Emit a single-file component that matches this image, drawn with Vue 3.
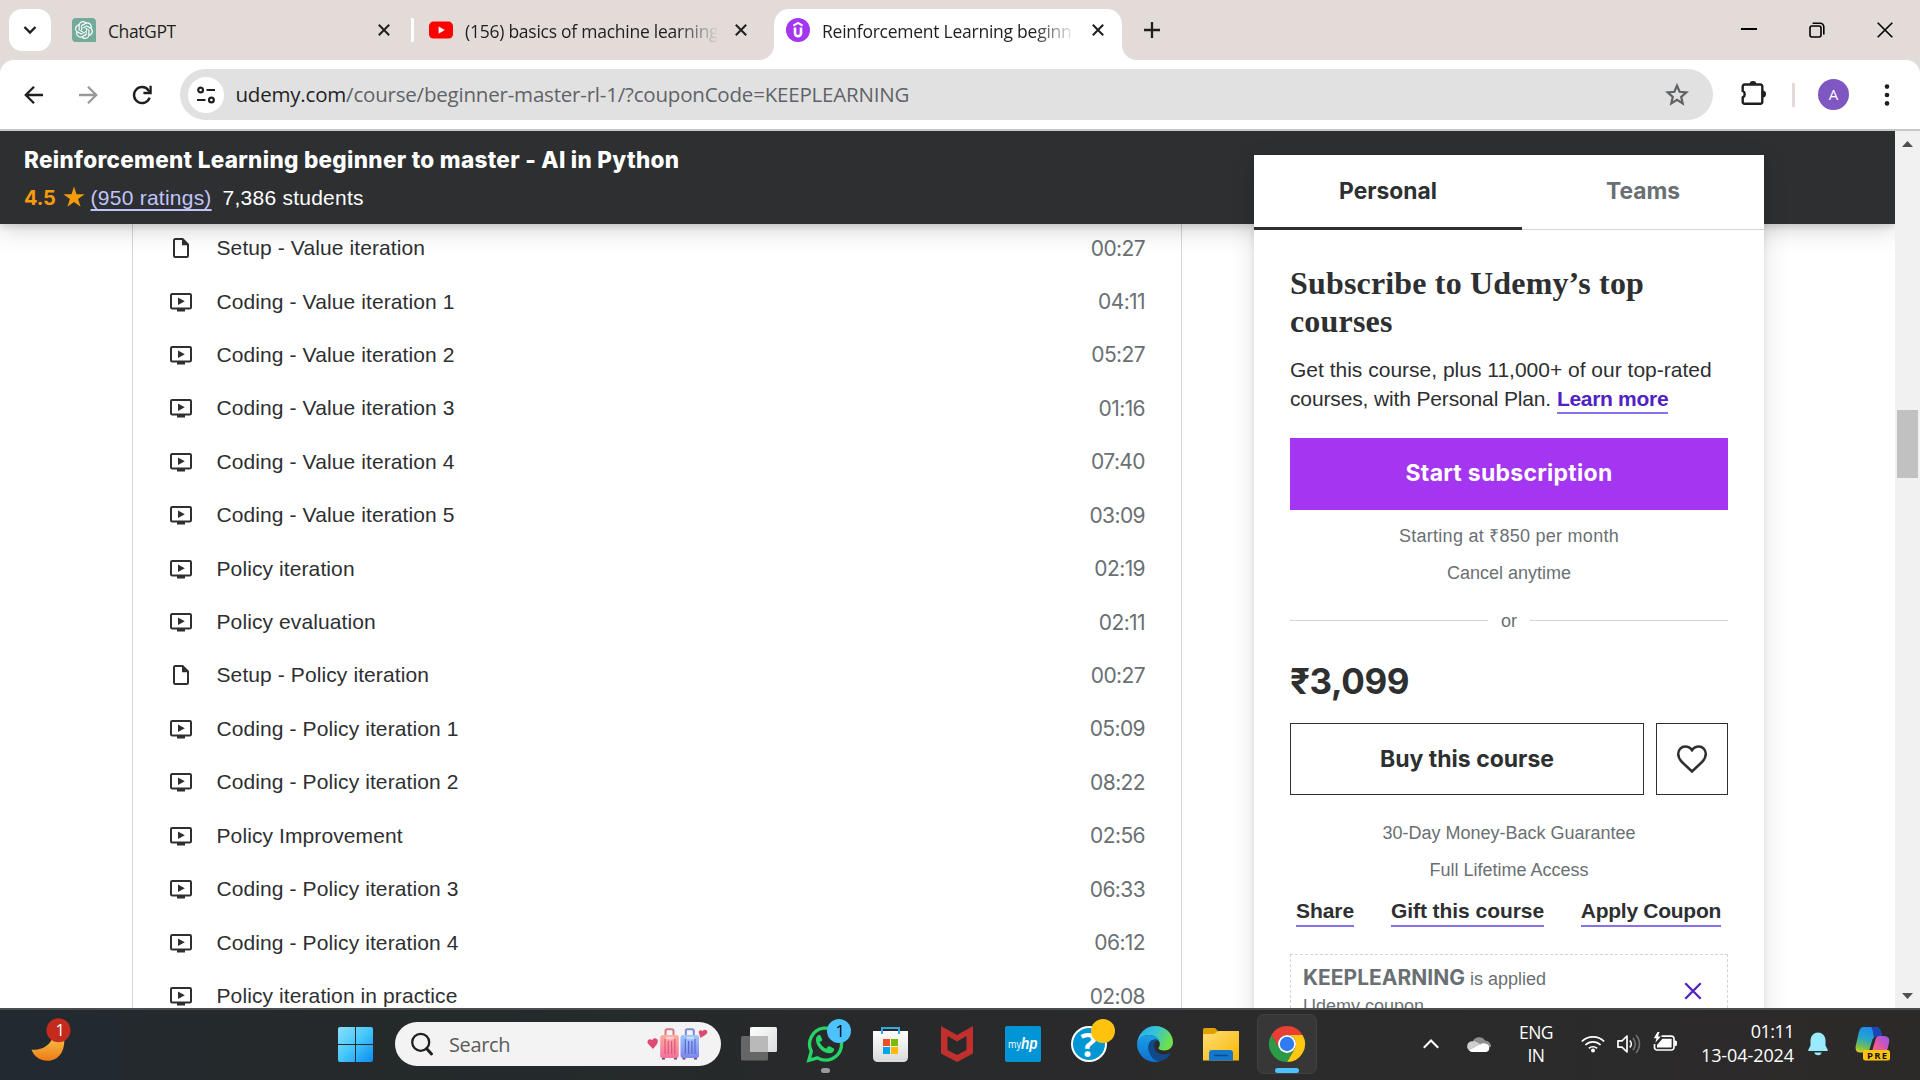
<script setup>
const lessons = [
  { title: 'Setup - Value iteration', time: '00:27', doc: true },
  { title: 'Coding - Value iteration 1', time: '04:11' },
  { title: 'Coding - Value iteration 2', time: '05:27' },
  { title: 'Coding - Value iteration 3', time: '01:16' },
  { title: 'Coding - Value iteration 4', time: '07:40' },
  { title: 'Coding - Value iteration 5', time: '03:09' },
  { title: 'Policy iteration', time: '02:19' },
  { title: 'Policy evaluation', time: '02:11' },
  { title: 'Setup - Policy iteration', time: '00:27', doc: true },
  { title: 'Coding - Policy iteration 1', time: '05:09' },
  { title: 'Coding - Policy iteration 2', time: '08:22' },
  { title: 'Policy Improvement', time: '02:56' },
  { title: 'Coding - Policy iteration 3', time: '06:33' },
  { title: 'Coding - Policy iteration 4', time: '06:12' },
  { title: 'Policy iteration in practice', time: '02:08' },
]
</script>

<template>
  <div class="screen">
    <div class="tabstrip">
      <button class="tab-search">
        <svg width="14" height="10" viewBox="0 0 14 10"><path d="M1.5 2 7 7.5 12.5 2" fill="none" stroke="#1f1f1f" stroke-width="2.4" /></svg>
      </button>
      <div class="tab tab-chat">
        <svg class="favicon" width="24" height="24" viewBox="0 0 24 24">
          <path d="M4 0h16a4 4 0 0 1 4 4v20H4a4 4 0 0 1-4-4V4a4 4 0 0 1 4-4z" fill="#74aa9c" />
          <g transform="translate(3 3) scale(.75)"><path fill="#fff" d="M22.2819 9.8211a5.9847 5.9847 0 0 0-.5157-4.9108 6.0462 6.0462 0 0 0-6.5098-2.9A6.0651 6.0651 0 0 0 4.9807 4.1818a5.9847 5.9847 0 0 0-3.9977 2.9 6.0462 6.0462 0 0 0 .7427 7.0966 5.98 5.98 0 0 0 .511 4.9107 6.051 6.051 0 0 0 6.5146 2.9001A5.9847 5.9847 0 0 0 13.2599 24a6.0557 6.0557 0 0 0 5.7718-4.2058 5.9894 5.9894 0 0 0 3.9977-2.9001 6.0557 6.0557 0 0 0-.7475-7.0729zm-9.022 12.6081a4.4755 4.4755 0 0 1-2.8764-1.0408l.1419-.0804 4.7783-2.7582a.7948.7948 0 0 0 .3927-.6813v-6.7369l2.02 1.1686a.071.071 0 0 1 .038.052v5.5826a4.504 4.504 0 0 1-4.4945 4.4944zm-9.6607-4.1254a4.4708 4.4708 0 0 1-.5346-3.0137l.142.0852 4.783 2.7582a.7712.7712 0 0 0 .7806 0l5.8428-3.3685v2.3324a.0804.0804 0 0 1-.0332.0615L9.74 19.9502a4.4992 4.4992 0 0 1-6.1408-1.6464zM2.3408 7.8956a4.485 4.485 0 0 1 2.3655-1.9728V11.6a.7664.7664 0 0 0 .3879.6765l5.8144 3.3543-2.0201 1.1685a.0757.0757 0 0 1-.071 0l-4.8303-2.7865A4.504 4.504 0 0 1 2.3408 7.872zm16.5963 3.8558L13.1038 8.364 15.1192 7.2a.0757.0757 0 0 1 .071 0l4.8303 2.7913a4.4944 4.4944 0 0 1-.6765 8.1042v-5.6772a.79.79 0 0 0-.407-.667zm2.0107-3.0231l-.142-.0852-4.7735-2.7818a.7759.7759 0 0 0-.7854 0L9.409 9.2297V6.8974a.0662.0662 0 0 1 .0284-.0615l4.8303-2.7866a4.4992 4.4992 0 0 1 6.6802 4.66zM8.3065 12.863l-2.02-1.1638a.0804.0804 0 0 1-.038-.0567V6.0742a4.4992 4.4992 0 0 1 7.3757-3.4537l-.142.0805L8.704 5.459a.7948.7948 0 0 0-.3927.6813zm1.0976-2.3654l2.602-1.4998 2.6069 1.4998v2.9994l-2.5974 1.4997-2.6067-1.4997Z" /></g>
        </svg>
        <span class="tab-title">ChatGPT</span>
        <svg class="tab-close" width="12" height="12" viewBox="0 0 12 12"><path d="M.8.8 11.2 11.2M11.2.8.8 11.2" stroke="#1f1f1f" stroke-width="2" /></svg>
      </div>
      <i class="tab-divider"></i>
      <div class="tab tab-video">
        <svg class="favicon" width="24" height="24" viewBox="0 0 24 24"><rect y="3.6" width="24" height="17" rx="4.4" fill="#f00" /><path d="M9.6 8.4 15.8 12.1 9.6 15.8z" fill="#fff" /></svg>
        <span class="tab-title fade">(156) basics of machine learning</span>
        <svg class="tab-close" width="12" height="12" viewBox="0 0 12 12"><path d="M.8.8 11.2 11.2M11.2.8.8 11.2" stroke="#1f1f1f" stroke-width="2" /></svg>
      </div>
      <div class="tab tab-active">
        <svg class="favicon" width="24" height="24" viewBox="0 0 24 24"><circle cx="12" cy="12" r="12" fill="#a435f0" /><path d="M7.4 7.6 12 4.9l4.6 2.7" fill="none" stroke="#fff" stroke-width="2" /><path d="M9 9.6v5.6a3 3 0 0 0 6 0V9.6" fill="none" stroke="#fff" stroke-width="2.6" /></svg>
        <span class="tab-title fade">Reinforcement Learning beginn</span>
        <svg class="tab-close" width="12" height="12" viewBox="0 0 12 12"><path d="M.8.8 11.2 11.2M11.2.8.8 11.2" stroke="#1f1f1f" stroke-width="2" /></svg>
      </div>
      <svg class="new-tab" width="16" height="16" viewBox="0 0 16 16"><path d="M8 0v16M0 8h16" stroke="#1f1f1f" stroke-width="2.3" /></svg>
      <div class="window-buttons">
        <svg width="16" height="16" viewBox="0 0 16 16"><path d="M0 7h16" stroke="#000" stroke-width="2" /></svg>
        <svg width="16" height="16" viewBox="0 0 16 16"><rect x="1" y="4" width="11" height="11" rx="2" fill="none" stroke="#000" stroke-width="1.6" /><path d="M3.6 1.2h7.6a3.6 3.6 0 0 1 3.6 3.6v7.6" fill="none" stroke="#000" stroke-width="1.6" /></svg>
        <svg width="16" height="16" viewBox="0 0 16 16"><path d="M.7.7 15.3 15.3M15.3.7.7 15.3" stroke="#000" stroke-width="1.6" /></svg>
      </div>
    </div>

    <div class="toolbar-back">
      <div class="toolbar">
        <svg width="20" height="20" viewBox="0 0 20 20"><path d="M19 10H2.500M10 1.800 1.800 10 10 18.200" fill="none" stroke="#1f1f1f" stroke-width="2.300" /></svg>
        <svg class="fwd" width="20" height="20" viewBox="0 0 20 20"><path d="M1 10h16.500M10 1.800 18.200 10 10 18.200" fill="none" stroke="#989898" stroke-width="2.300" /></svg>
        <svg class="reload" width="20" height="20" viewBox="0 0 20 20"><path d="M17.600 12.600A8 8 0 1 1 16.400 5.200L18 7" fill="none" stroke="#1f1f1f" stroke-width="2.400" /><path d="M18.600.8V8H11.400" fill="none" stroke="#1f1f1f" stroke-width="2.300" /></svg>
        <div class="omnibox">
          <span class="site-info">
            <svg width="18" height="18" viewBox="0 0 18 18" fill="none" stroke="#1f1f1f" stroke-width="2.200"><circle cx="3.600" cy="4" r="2.400" /><path d="M9.500 4H18M0 14h8.500" /><circle cx="14.400" cy="14" r="2.400" /></svg>
          </span>
          <span class="url"><b>udemy.com</b>/course/beginner-master-rl-1/?couponCode=KEEPLEARNING</span>
          <svg class="star" width="24" height="24" viewBox="0 0 24 24"><path d="m12 2.600 2.600 6.200 6.700.6-5.100 4.400 1.500 6.600-5.700-3.500-5.700 3.500 1.500-6.600L2.700 9.400l6.700-.6z" fill="none" stroke="#5f6368" stroke-width="2.200" /></svg>
        </div>
        <svg class="puzzle" width="26" height="26" viewBox="0 0 26 26"><path d="M3.500 4.500h16a1.800 1.800 0 0 1 1.800 1.800V22a1.800 1.800 0 0 1-1.800 1.800h-16A1.800 1.800 0 0 1 1.700 22v-4.600a3.600 3.600 0 0 0 0-6.500V6.300a1.800 1.800 0 0 1 1.800-1.800z" fill="none" stroke="#1f1f1f" stroke-width="2.400" /><path d="M8.600 4.500a3.400 3.400 0 0 1 6.800 0zM21.500 10.600a3.500 3.500 0 0 1 0 7z" fill="#1f1f1f" /></svg>
        <i class="bar-divider"></i>
        <span class="avatar">A</span>
        <svg class="menu" width="6" height="22" viewBox="0 0 6 22" fill="#1f1f1f"><circle cx="3" cy="2.600" r="2.300" /><circle cx="3" cy="11" r="2.300" /><circle cx="3" cy="19.400" r="2.300" /></svg>
      </div>
    </div>

    <div class="viewport">
      <div class="page">
        <header class="course-bar">
          <h1>Reinforcement Learning beginner to master - AI in Python</h1>
          <div class="stats">
            <b class="score">4.5</b>
            <svg width="22" height="22" viewBox="0 0 22 22"><path d="m11 .6 2.500 7.700h8.100l-6.500 4.700 2.500 7.700L11 16l-6.600 4.700 2.500-7.700L.4 8.300h8.100z" fill="#f69c08" /></svg>
            <a>(950 ratings)</a>
            <span class="students">7,386 students</span>
          </div>
        </header>
        <ul class="lessons">
          <li v-for="(l, i) in lessons" :key="i">
            <svg v-if="l.doc" width="22" height="22" viewBox="0 0 22 22"><path d="M12.600 2H5.200A1.200 1.200 0 0 0 4 3.200v15.600A1.200 1.200 0 0 0 5.200 20h11.600a1.200 1.200 0 0 0 1.200-1.200V7.400z" fill="none" stroke="#2d2f31" stroke-width="2" /><path d="M12 1.500v6.700h6.700z" fill="#2d2f31" /></svg>
            <svg v-else width="22" height="22" viewBox="0 0 22 22"><rect x="1" y="3" width="20" height="14.500" rx="1.200" fill="none" stroke="#2d2f31" stroke-width="2" /><path d="M8 6.500v7.500l6.800-3.750zM7 18h8v2.500H7z" fill="#2d2f31" /></svg>
            <span class="title">{{ l.title }}</span>
            <span class="time">{{ l.time }}</span>
          </li>
        </ul>

        <aside class="card">
          <div class="plan-tabs">
            <div class="plan on">Personal</div>
            <div class="plan">Teams</div>
          </div>
          <div class="card-body">
            <h2>Subscribe to Udemy’s top<br />courses</h2>
            <p class="pitch">Get this course, plus 11,000+ of our top-rated<br /><span class="tight">courses, with Personal Plan.</span> <a>Learn more</a></p>
            <button class="start">Start subscription</button>
            <p class="note loose">Starting at ₹850 per month</p>
            <p class="note">Cancel anytime</p>
            <div class="or"><i></i><span>or</span><i></i></div>
            <div class="price">₹3,099</div>
            <div class="buy-row">
              <button class="buy">Buy this course</button>
              <button class="wish">
                <svg width="32" height="30" viewBox="0 0 32 30"><path d="M16 27.500 6 18C3.300 15.300 2.200 12.800 2.200 9.800 2.200 5.500 5.400 2.600 9.200 2.600c2.700 0 4.900.9 6.800 3.600 1.900-2.700 4.100-3.600 6.800-3.600 3.800 0 7 2.900 7 7.200 0 3-1.100 5.500-3.800 8.200z" fill="none" stroke="#2d2f31" stroke-width="2.500" /></svg>
              </button>
            </div>
            <p class="note first">30-Day Money-Back Guarantee</p>
            <p class="note">Full Lifetime Access</p>
            <div class="links">
              <a>Share</a><a>Gift this course</a><a class="apply">Apply Coupon</a>
            </div>
            <div class="coupon">
              <div><b>KEEPLEARNING</b> is applied<br />Udemy coupon</div>
              <svg width="18" height="18" viewBox="0 0 18 18"><path d="M1.300 1.300 16.700 16.700M16.700 1.300 1.300 16.700" stroke="#5022c3" stroke-width="2.300" /></svg>
            </div>
          </div>
        </aside>
      </div>
      <div class="scrollbar">
        <svg width="11" height="6" viewBox="0 0 11 6"><path d="M0 6 5.500 0 11 6z" fill="#505050" /></svg>
        <i></i>
        <svg class="down" width="11" height="6" viewBox="0 0 11 6"><path d="M0 0h11L5.500 6z" fill="#505050" /></svg>
      </div>
    </div>

    <footer class="taskbar">
      <svg class="moon" width="36" height="60" viewBox="0 0 36 60">
        <defs><linearGradient id="mo" x1="0" y1="0" x2="0" y2="1"><stop offset="0" stop-color="#f8c64a" /><stop offset="1" stop-color="#ee7a16" /></linearGradient></defs>
        <path d="M.5 35.500C9 37 20 32 22.500 21L33 22C35 38 27 46.500 17 46.800 8 47 2.500 41.500.5 35.500z" fill="url(#mo)" />
        <circle cx="27.500" cy="16.300" r="12" fill="#c42b1c" />
        <text x="24.500" y="22" fill="#fff" font-family="Open Sans" font-size="16.500">1</text>
      </svg>
      <svg class="start-menu" width="36" height="60" viewBox="0 0 36 60">
        <defs><linearGradient id="wi" x1="0" y1="0" x2="1" y2="1"><stop offset="0" stop-color="#8be0ff" /><stop offset=".5" stop-color="#45c6fb" /><stop offset="1" stop-color="#0a8cf0" /></linearGradient></defs>
        <path d="M2 13h15v17H0V15a2 2 0 0 1 2-2zM18 13h15.500a2 2 0 0 1 1.500 2v15H18zM0 31h17v17H2a2 2 0 0 1-2-2zM18 31h17v15a2 2 0 0 1-2 2H18z" fill="url(#wi)" />
      </svg>
      <div class="search">
        <svg width="22" height="24" viewBox="0 0 22 24"><circle cx="9.700" cy="10.300" r="8.500" fill="none" stroke="#1f1f1f" stroke-width="2.300" /><path d="m15.500 16.500 5 5.500" stroke="#1f1f1f" stroke-width="3" stroke-linecap="round" /></svg>
        <span>Search</span>
        <svg class="luggage" width="62" height="34" viewBox="0 0 62 34">
          <defs>
            <linearGradient id="lp" x1="0" y1="0" x2="0" y2="1"><stop offset="0" stop-color="#ffae9c" /><stop offset="1" stop-color="#f2709c" /></linearGradient>
            <linearGradient id="lb" x1="0" y1="0" x2="0" y2="1"><stop offset="0" stop-color="#9ec8fb" /><stop offset="1" stop-color="#7d86ea" /></linearGradient>
          </defs>
          <path d="M6 22 1 16.800C-.8 13.500 2.500 10.500 5.200 13.200c1.400-3 6.200-2.200 5.600 1.600-.2 2.400-2.600 4.600-4.800 7.200z" fill="#dd4a72" />
          <path d="m53.500 11-1.700-5.200c-.5-2.600 2.400-3.600 3.700-1.600 1.500-2.800 5.500-1.500 4.800 1.300-.5 2.200-3.800 3.500-6.800 5.500z" fill="#dd4a72" />
          <path d="M18.500 9V3.800A1.600 1.600 0 0 1 20.100 2.200h4.800A1.600 1.600 0 0 1 26.500 3.800V9" fill="none" stroke="#d77a80" stroke-width="2" />
          <path d="M38.800 9V3.800A1.600 1.600 0 0 1 40.400 2.200h4.800A1.600 1.600 0 0 1 46.800 3.800V9" fill="none" stroke="#7d88da" stroke-width="2" />
          <rect x="13.200" y="8" width="18.500" height="23" rx="2.500" fill="url(#lp)" /><rect x="33.500" y="8" width="18.500" height="23" rx="2.500" fill="url(#lb)" />
          <path d="M18 12v15M21.300 14v13M24.600 14v13M27.800 12v15" stroke="#d65583" stroke-width="1.100" /><path d="M38.300 12v15M41.600 14v13M44.900 14v13M48 12v15" stroke="#5663cd" stroke-width="1.100" />
          <path d="M19.500 11h7" stroke="#ffd0d4" stroke-width="2.500" /><path d="M40 11h7" stroke="#c3dcff" stroke-width="2.500" />
          <path d="M15 31.800h3M27 31.800h3M35.500 31.800h3M47 31.800h3" stroke="#6b4a80" stroke-width="1.500" />
        </svg>
      </div>
      <div class="apps">
        <svg width="36" height="60" viewBox="0 0 36 60">
          <defs><linearGradient id="tv" x1="0" y1="0" x2="1" y2="1"><stop offset="0" stop-color="#fff" /><stop offset="1" stop-color="#dcdcdc" /></linearGradient></defs>
          <rect x="9" y="13" width="27" height="25" rx="1.500" fill="url(#tv)" /><rect y="22" width="27" height="24.500" rx="1.500" fill="#666" /><path d="M9 22h18v16H9z" fill="#b9b9b9" />
        </svg>
        <svg width="36" height="60" viewBox="0 0 36 60">
          <path d="M1.800 46.300 4.300 37.300A16 16 0 1 1 10.500 43.900z" fill="none" stroke="#25d366" stroke-width="3.300" stroke-linejoin="miter" />
          <path transform="translate(6.500 18.500) scale(.96)" d="M6.200 9.800c1.500 3 4 5.500 7 7l1.700-2c.5-.6 1.200-.7 1.800-.4l4 2c.7.300.9 1 .7 1.700-.6 2.300-2.600 3.600-4.900 3.600C9.500 21.500 2.500 14 2.500 7.500c0-2.300 1.200-4 3-4.800.8-.3 1.600 0 1.900.7l1.600 3.700c.3.600.1 1.200-.3 1.700z" fill="#25d366" />
          <circle cx="32" cy="17" r="12" fill="#4cc2ff" /><text x="28.500" y="23" fill="#000" font-family="Open Sans" font-size="16.500">1</text>
          <rect x="14" y="54" width="9" height="5" rx="2.500" fill="#9a9a9a" />
        </svg>
        <svg width="36" height="60" viewBox="0 0 36 60">
          <defs><linearGradient id="st" x1="0" y1="0" x2="0" y2="1"><stop offset="0" stop-color="#fff" /><stop offset="1" stop-color="#d9d9d9" /></linearGradient></defs>
          <path d="M0 17h35v26.500a4.500 4.500 0 0 1-4.500 4.500h-26A4.500 4.500 0 0 1 0 43.500z" fill="url(#st)" /><path d="M9 20v-6h17v6" fill="none" stroke="#38a6e0" stroke-width="2" />
          <path d="M10 25h7v7h-7z" fill="#f25022" /><path d="M18 25h7v7h-7z" fill="#7fba00" /><path d="M10 33h7v7h-7z" fill="#00a4ef" /><path d="M18 33h7v7h-7z" fill="#ffb900" />
        </svg>
        <svg width="36" height="60" viewBox="0 0 36 60"><path d="M2 12l16 9 16-9v27.500L18 48 2 39.500zM8.500 22v14L18 41l9.500-5V22L18 27.500z" fill="#c1302c" fill-rule="evenodd" /></svg>
        <svg width="36" height="60" viewBox="0 0 36 60">
          <rect y="12" width="36" height="36" rx="2" fill="#0096d6" />
          <text x="3" y="34" fill="#fff" font-family="Open Sans" font-size="11" textLength="13" lengthAdjust="spacingAndGlyphs">my</text><text x="16" y="34.500" fill="#fff" font-family="Liberation Sans" font-size="17" font-style="italic" font-weight="700" textLength="16.500" lengthAdjust="spacingAndGlyphs">hp</text>
        </svg>
        <svg width="36" height="60" viewBox="0 0 36 60">
          <circle cx="18" cy="30" r="17" fill="#0096d6" stroke="#fff" stroke-width="2" /><text x="9.500" y="42.500" fill="#fff" font-family="Open Sans" font-size="34" font-weight="700">?</text>
          <circle cx="32" cy="17" r="12" fill="#ffc20e" />
        </svg>
        <svg width="36" height="60" viewBox="0 0 36 60">
          <defs>
            <linearGradient id="e1" x1="0" y1="0" x2="1" y2=".4"><stop offset="0" stop-color="#2aa5ea" /><stop offset=".5" stop-color="#33c3dc" /><stop offset="1" stop-color="#6ee04a" /></linearGradient>
            <linearGradient id="e2" x1="0" y1="0" x2="0" y2="1"><stop offset="0" stop-color="#1b9fe8" /><stop offset="1" stop-color="#0f6fd0" /></linearGradient>
          </defs>
          <path d="M0 30C1 19 9 12 18 12c11 0 18 8 18 16 0 5.500-4 8.500-8.500 8.500-4 0-6-1.300-6-2.300 0-.8 1.300-1.400 1.300-4.200C22.800 25 18 21 12 21 6 21 1.500 25 0 30z" fill="url(#e1)" />
          <path d="M0 30C1 24.500 6 21 12 21c6 0 10.800 4 10.800 8 0-2-2.300-3.600-4.800-3.600-4 0-6.500 3.600-6.500 8C11.500 40 16 45 22 47.500 20.500 48 19 48 18 48 8 48 0 40 0 30z" fill="url(#e2)" />
          <path d="M18 25.400c-4 0-6.500 3.600-6.500 8 0 7.600 5.500 13.100 10.500 14.100 5-1 9-3.800 11.500-7.500.4-.7-.2-1-.8-.7-2 1-4.200 1.200-6.200 1.200-6 0-9.500-4-9.500-8.500 0-3 1.600-5.200 3.500-5.800z" fill="#114a8b" />
        </svg>
        <svg width="36" height="60" viewBox="0 0 36 60">
          <defs><linearGradient id="fo" x1="0" y1="0" x2="1" y2="1"><stop offset="0" stop-color="#ffdf78" /><stop offset="1" stop-color="#f7b500" /></linearGradient></defs>
          <path d="M1.500 14H12l4 4v6H0v-8.500A1.500 1.500 0 0 1 1.500 14z" fill="#e0a100" /><path d="M0 20h11l4.500-3H36v29.500H0z" fill="url(#fo)" />
          <path d="M6 46.500V39a3 3 0 0 1 3-3h18a3 3 0 0 1 3 3v7.500z" fill="#1377cc" /><path d="M11 41.500h14" stroke="#0a4a8a" stroke-width="1.500" />
        </svg>
        <div class="running">
          <svg width="36" height="60" viewBox="0 0 36 60">
            <path d="M2.400 21A18 18 0 0 1 33.600 21L18 21A9 9 0 0 0 10.200 34.500z" fill="#ea3f34" /><path d="M33.600 21A18 18 0 0 1 18 48L25.800 34.500A9 9 0 0 0 18 21z" fill="#fdc80f" /><path d="M18 48A18 18 0 0 1 2.400 21L10.200 34.500A9 9 0 0 0 25.800 34.500z" fill="#2a9c48" />
            <circle cx="18" cy="30" r="9" fill="#fff" /><circle cx="18" cy="30" r="7.200" fill="#2f7bef" /><rect x="6" y="54" width="24" height="5" rx="2.500" fill="#4cc2ff" />
          </svg>
        </div>
      </div>
      <svg class="chev" width="16" height="10" viewBox="0 0 16 10"><path d="M.8 8.700 8 1.500 15.200 8.700" fill="none" stroke="#fff" stroke-width="2" /></svg>
      <svg class="cloud" width="24" height="18" viewBox="0 0 24 18"><path d="M5.500 7A7 7 0 0 1 18 5.500 6 6 0 0 1 24 12H5z" fill="#8f8f8f" /><path d="M5 16.500A5 5 0 0 1 5.500 6.300c3-.6 5 1 8 3.200L6 16z" fill="#cfcfcf" /><path d="M2 15.500 15 8.500a5 5 0 0 1 4 .3 4.200 4.200 0 0 1 0 8.200H5a5 5 0 0 1-3-1.500z" fill="#fff" /></svg>
      <div class="lang"><span>ENG</span><span>IN</span></div>
      <svg class="wifi" width="24" height="18" viewBox="0 0 24 18" fill="none" stroke="#fff" stroke-width="1.700"><path d="M.8 6.500a15.800 15.800 0 0 1 22.400 0M4.400 10a10.800 10.800 0 0 1 15.200 0M7.900 13.400a5.900 5.900 0 0 1 8.200 0" /><circle cx="12" cy="15.400" r="2" fill="#fff" stroke="none" /></svg>
      <svg class="sound" width="24" height="20" viewBox="0 0 24 20" fill="none" stroke="#fff" stroke-width="1.700"><path d="M1 6.800h4L10 2v16l-5-4.800H1z" stroke-linejoin="round" /><path d="M12.800 6.500a5 5 0 0 1 0 7" /><path d="M15.800 3.800a9 9 0 0 1 0 12.400M19 1.200a13 13 0 0 1 0 17.600" stroke="#6d6d6d" /></svg>
      <svg class="battery" width="24" height="20" viewBox="0 0 24 20"><path d="M8.500 4.200H18.500A2.500 2.500 0 0 1 21 6.700V15.500A2.500 2.500 0 0 1 18.500 18H4A2.500 2.500 0 0 1 1.500 15.500V12" fill="none" stroke="#fff" stroke-width="1.700" /><path d="M9.500 6.800H18.600V15.500H4V13z" fill="#fff" /><path d="M21.500 8.500h1a1.500 1.500 0 0 1 1.500 1.500v2.500a1.500 1.500 0 0 1-1.500 1.500h-1z" fill="#fff" /><path d="M4.500 0 .8 6.300H3.500L2.300 10.800 7.800 4.500H5L6.500 0z" fill="#fff" /></svg>
      <div class="clock"><span class="hour">01:11</span><span>13-04-2024</span></div>
      <svg class="bell" width="20" height="24" viewBox="0 0 20 24" fill="#99ebff"><path d="M10 .5a7.500 7.500 0 0 1 7.500 7.500v5.500l2.200 4.200c.3.700-.1 1.300-.9 1.300H1.200c-.8 0-1.200-.6-.9-1.300l2.200-4.200V8A7.500 7.500 0 0 1 10 .5zM6.200 20.500h7.600a4 4 0 0 1-7.600 0z" /></svg>
      <svg class="copilot" width="36" height="36" viewBox="0 0 36 36">
        <defs>
          <linearGradient id="c1" x1=".3" y1="0" x2="0" y2="1"><stop offset="0" stop-color="#1d8df0" /><stop offset=".4" stop-color="#27a6c9" /><stop offset=".75" stop-color="#7cbf4b" /><stop offset="1" stop-color="#f0cf1e" /></linearGradient>
          <linearGradient id="c2" x1="1" y1="0" x2="0" y2="1"><stop offset="0" stop-color="#8f55f0" /><stop offset=".5" stop-color="#e056a8" /><stop offset="1" stop-color="#fb7a5a" /></linearGradient>
        </defs>
        <path d="M8.500 1h12c3 0 4.500 2 5.300 5l1 4h-4.500c-3 0-4.500 2-5.300 5l-2.200 7.500c-.8 2.500-2.300 4-4.800 4H5C1 26.500 0 23 .8 19.500l3-13C4.700 3 6 1 8.500 1z" fill="url(#c1)" />
        <path d="M16 1h5c3 0 4.200 2 5 5l1 4h-4c-1.500 0-3 .5-3.800 1.500C18 8 18 3 16 1z" fill="#1a46b8" />
        <path d="M24 10h5c4.500 0 6 3 5 7l-2 8c-.7 2.700-2 4-4.500 4H16l4.500-15.500C21.300 11 22 10 24 10z" fill="url(#c2)" />
        <rect x="8" y="24" width="27" height="10.500" rx="2.500" fill="#ffc20e" />
        <text x="12" y="32.700" font-family="Open Sans" font-size="9.500" font-weight="700" fill="#111" textLength="20">PRE</text>
      </svg>
    </footer>
  </div>
</template>

<style>
html, body { margin: 0; overflow: hidden; background: #fff; }
</style>

<style scoped>
.screen { width: 1920px; height: 1080px; display: flex; flex-direction: column; overflow: hidden; font-family: "Liberation Sans", Arial, sans-serif; color: #2d2f31; }
.screen * { box-sizing: border-box; }
svg { display: block; flex: none; overflow: visible; }
button { border: 0; padding: 0; margin: 0; background: none; font: inherit; color: inherit; display: flex; align-items: center; justify-content: center; }
h1, h2, p, ul { margin: 0; padding: 0; }

.tabstrip, .toolbar, .taskbar { font-family: "Open Sans", "Noto Sans", sans-serif; white-space: nowrap; }
.tabstrip { height: 60px; flex: none; background: #e3dbd8; display: flex; align-items: center; color: #1f1f1f; font-size: 17.5px; letter-spacing: -0.25px; }
.tab-search { width: 42px; height: 42px; margin-left: 9px; background: #fff; border-radius: 13px; }
.tab { display: flex; align-items: center; height: 51px; }
.tab-title { margin-left: 12px; height: 30px; line-height: 30px; margin-top: 2px; overflow: hidden; }
.tab-close { margin-left: auto; }
.tab-chat { width: 318px; margin-left: 21px; }
.tab-chat .tab-title { letter-spacing: -0.4px; }
.tab-divider { width: 3px; height: 24px; margin-left: 21px; background: #fff; border-radius: 1px; }
.tab-video { width: 318px; margin-left: 15px; }
.tab-active { position: relative; align-self: flex-end; width: 348px; margin-left: 27px; padding: 0 18px 9px 12px; background: #fff; border-radius: 15px 15px 0 0; }
.tab-active::before, .tab-active::after { content: ""; position: absolute; bottom: 0; width: 15px; height: 15px; }
.tab-active::before { left: -15px; background: radial-gradient(circle at 0 0, transparent 14.5px, #fff 15.5px); }
.tab-active::after { right: -15px; background: radial-gradient(circle at 100% 0, transparent 14.5px, #fff 15.5px); }
.fade { width: 252px; -webkit-mask-image: linear-gradient(90deg, #000 212px, transparent 254px); mask-image: linear-gradient(90deg, #000 212px, transparent 254px); }
.new-tab { margin-left: 22px; }
.window-buttons { margin-left: auto; margin-right: 27px; display: flex; gap: 52px; }

.toolbar-back { flex: none; background: #e3dbd8; }
.toolbar { height: 71px; background: #fff; border-radius: 14px 14px 0 0; border-bottom: 2px solid #c5c8c7; display: flex; align-items: center; padding-left: 23.5px; }
.fwd { margin-left: 34px; }
.reload { margin-left: 34px; }
.omnibox { width: 1533px; height: 51px; margin-left: 28.5px; border-radius: 26px; background: #e1e1e1; display: flex; align-items: center; padding: 0 24px 0 8px; }
.site-info { width: 36px; height: 36px; border-radius: 50%; background: #fff; display: flex; align-items: center; justify-content: center; }
.url { margin-left: 11.5px; font-size: 20.5px; line-height: 30px; letter-spacing: -0.2px; color: #5f6368; margin-top: -1px; }
.url b { font-weight: 400; color: #1f1f1f; }
.star { margin-left: auto; }
.puzzle { margin-left: 28px; margin-top: -4px; }
.bar-divider { width: 3px; height: 24px; margin-left: 25px; background: #e3dbd8; }
.avatar { width: 31px; height: 31px; margin-left: 23px; border-radius: 50%; background: #7e57c2; color: #fff; font-size: 15px; line-height: 31px; text-align: center; }
.menu { margin-left: 35px; }

.viewport { flex: 1; min-height: 0; display: flex; }
.page { position: relative; width: 1895px; overflow: hidden; background: #fff; white-space: nowrap; }
.course-bar { position: relative; z-index: 1; height: 93px; padding: 13px 24px 0; background: #2d2f31; color: #fff; box-shadow: 0 3px 6px rgba(0, 0, 0, .12), 0 6px 24px rgba(0, 0, 0, .16); }
.course-bar h1 { font-family: Inter, sans-serif; font-size: 22.5px; line-height: 32px; font-weight: 800; letter-spacing: 0.3px; }
.stats { display: flex; align-items: center; margin-top: 6px; font-size: 21px; line-height: 32px; letter-spacing: 0.24px; }
.score { font-family: Inter, sans-serif; font-size: 20px; color: #f69c08; letter-spacing: -0.2px; }
.stats svg { margin: -2px 6px 0 7px; }
.stats a { color: #c0c4fc; text-decoration: underline; text-underline-offset: 4px; text-decoration-thickness: 1.5px; }
.students { margin-left: 11px; }
.lessons { list-style: none; width: 1050px; height: 820px; margin-left: 132px; margin-top: -2.6px; padding: 0 36px 0 37px; border-left: 1px solid #d1d7dc; border-right: 1px solid #d1d7dc; }
.lessons li { display: flex; align-items: center; height: 53.43px; font-size: 21px; letter-spacing: 0.1px; }
.title { margin-left: 24.5px; }
.time { margin-left: auto; font-family: Inter, sans-serif; letter-spacing: -0.6px; color: #6a6f73; }

.card { position: absolute; z-index: 2; left: 1254px; top: 24px; width: 510px; height: 900px; background: #fff; box-shadow: 0 3px 6px rgba(0, 0, 0, .08), 0 6px 24px rgba(0, 0, 0, .12); }
.plan-tabs { display: flex; height: 75px; border-bottom: 1px solid #d1d2e0; }
.plan { flex: 1; padding-top: 22px; font-family: Inter, sans-serif; font-size: 22.8px; line-height: 28px; font-weight: 700; text-align: center; color: #6a6f73; }
.plan.on { flex: none; width: 268px; height: 75px; border-bottom: 3px solid #2d2f31; color: #2d2f31; }
.card-body { padding: 34px 36px 0; }
h2 { font-family: "Liberation Serif", "Times New Roman", serif; font-size: 32px; line-height: 38.4px; font-weight: 700; letter-spacing: 0.17px; }
.pitch { margin-top: 14px; font-size: 21px; line-height: 29.4px; }
.tight { letter-spacing: -0.14px; }
.pitch a, .links a { font-weight: 700; border-bottom: 2px solid #8670ed; }
.pitch a { display: inline-block; line-height: 27px; color: #5022c3; letter-spacing: -0.3px; }
.start { width: 438px; height: 72px; margin-top: 24px; padding-bottom: 2px; background: #a435f0; color: #fff; font-family: Inter, sans-serif; font-size: 23px; font-weight: 700; letter-spacing: 0.27px; }
.note { text-align: center; font-size: 18px; line-height: 24px; color: #6a6f73; padding-top: 2px; margin-top: 11px; }
.note.loose { letter-spacing: 0.26px; margin-top: 12px; }
.note.first { margin-top: 24px; }
.or { display: flex; align-items: center; justify-content: space-between; margin-top: 17px; height: 36px; font-size: 18px; color: #6a6f73; }
.or span { padding-top: 2px; }
.or i { width: 198px; height: 1px; background: #d1d7dc; }
.price { margin-top: 22px; font-family: Inter, sans-serif; font-size: 35px; line-height: 43px; font-weight: 700; letter-spacing: -0.4px; }
.buy-row { display: flex; gap: 12px; margin-top: 20px; }
.buy, .wish { height: 72px; border: 1px solid #2d2f31; font-family: Inter, sans-serif; font-size: 23px; font-weight: 700; }
.buy { width: 354px; }
.wish { width: 72px; }
.links { display: flex; justify-content: space-between; margin: 14.5px 7px 0 6px; font-size: 21px; line-height: 28px; letter-spacing: -0.05px; }
.apply { letter-spacing: -0.28px; }
.coupon { display: flex; justify-content: space-between; margin-top: 27px; padding: 10px 25px 0 12px; height: 90px; border: 1px dashed #d1d2e0; color: #6a6f73; font-size: 18px; line-height: 27px; }
.coupon b { font-family: Inter, sans-serif; font-size: 21px; line-height: 26px; }
.coupon svg { margin-top: 17px; }

.scrollbar { width: 25px; background: #f1f1f1; display: flex; flex-direction: column; align-items: center; padding-top: 10px; }
.scrollbar i { width: 21px; height: 68px; margin-top: 263px; background: #c1c1c1; }
.scrollbar .down { margin-top: auto; margin-bottom: 9px; }

.taskbar { height: 72px; flex: none; display: flex; align-items: center; padding-bottom: 2px; border-top: 2px solid #4b4c4d; background: linear-gradient(90deg, #212a31, #25292b 15%, #242a2b 28%, #28292b 45%, #2b2b2c 65%, #2c2a29); color: #fff; font-size: 18px; }
.moon { margin-left: 31px; }
.start-menu { margin-left: 271px; }
.search { width: 326px; height: 44px; margin-left: 21px; padding: 0 12px 0 16px; border-radius: 22px; background: #f3f3f3; color: #5a5a5a; display: flex; align-items: center; font-size: 20px; letter-spacing: -0.35px; }
.search span { margin-left: 16px; }
.luggage { margin-left: auto; }
.apps { display: flex; gap: 30px; margin-left: 20px; }
.running { width: 60px; height: 60px; margin: 0 -12px; padding-left: 11px; border: 1px solid #414141; border-radius: 7px; background: #373737; }
.running svg { margin-top: -1px; }
.chev { margin-left: 118px; }
.cloud { margin-left: 28px; }
.lang { width: 34px; margin-left: 28px; display: flex; flex-direction: column; align-items: center; line-height: 23px; font-size: 17.5px; letter-spacing: -0.6px; }
.wifi { margin-left: 28px; }
.sound { margin-left: 12px; }
.battery { margin-left: 12px; margin-top: -4px; }
.clock { width: 93px; margin-left: 24px; margin-top: -2px; display: flex; flex-direction: column; align-items: flex-end; line-height: 24px; letter-spacing: -0.09px; }
.hour { letter-spacing: -0.55px; }
.bell { margin-left: 14px; }
.copilot { margin-left: 27px; }
</style>
